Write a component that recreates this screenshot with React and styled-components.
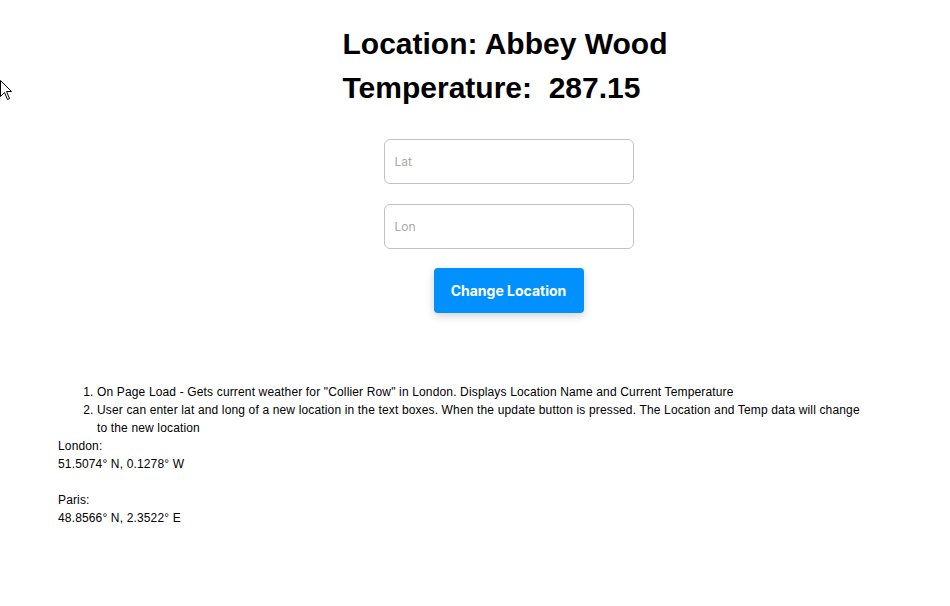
import { createGlobalStyle, styled } from "styled-components";

const GlobalStyle = createGlobalStyle`
  html, body {
    margin: 0;
    padding: 0;
    background: #ffffff;
  }

  body {
    font-family: "Liberation Sans", Arial, sans-serif;
    color: #000;
  }
`;

export default function App() {
  return (
    <>
      <GlobalStyle />
      <Page>
        <Cursor width="13" height="21" viewBox="0 0 13 21">
          <path
            d="M0.5 0.5 L0.5 16.5 L4.5 12.5 L7.5 19.5 L9.5 18.5 L6.5 11.5 L11.5 11.5 Z"
            fill="#fff"
            stroke="#000"
            strokeWidth="1"
          />
        </Cursor>

        <Weather>
          <Heading>
            <Title>Location: Abbey Wood</Title>
            <Title>Temperature:&nbsp; 287.15</Title>
          </Heading>

          <Form>
            <Field placeholder="Lat" />
            <Field placeholder="Lon" />
            <Button type="button">Change Location</Button>
          </Form>
        </Weather>

        <Notes>
          <Steps>
            <li>
              On Page Load - Gets current weather for "Collier Row" in London.
              Displays Location Name and Current Temperature
            </li>
            <li>
              User can enter lat and long of a new location in the text boxes.
              When the update button is pressed. The Location and Temp data will
              change to the new location
            </li>
          </Steps>
          <p>
            London:
            <br />
            51.5074° N, 0.1278° W
            <br />
            <br />
            Paris:
            <br />
            48.8566° N, 2.3522° E
          </p>
        </Notes>
      </Page>
    </>
  );
}

const Page = styled.div`
  position: relative;
  width: 950px;
  min-height: 606px;
`;

const Cursor = styled.svg`
  position: absolute;
  left: 0;
  top: 80px;
`;

const Weather = styled.section`
  display: flex;
  flex-direction: column;
  align-items: center;
  padding: 22px 0 0 67px;
`;

const Heading = styled.div`
  display: flex;
  flex-direction: column;
  align-items: flex-start;
  margin-left: -7px;
`;

const Title = styled.h1`
  margin: 0;
  font-size: 30px;
  line-height: 44px;
  font-weight: 700;
  white-space: nowrap;
`;

const Form = styled.div`
  display: flex;
  flex-direction: column;
  align-items: center;
  gap: 20px;
  margin-top: 29px;
`;

const Field = styled.input`
  box-sizing: border-box;
  width: 250px;
  height: 45px;
  padding: 0 10px;
  border: 1px solid #c2c2c2;
  border-radius: 6px;
  font-family: Inter, "Noto Sans", sans-serif;
  font-size: 12px;
  outline: none;

  &::placeholder {
    color: #a9a9a9;
  }
`;

const Button = styled.button`
  width: 150px;
  height: 45px;
  margin-top: -1px;
  border: none;
  border-radius: 4px;
  background: #0091ff;
  color: #fff;
  font-family: Inter, "Noto Sans", sans-serif;
  font-size: 14px;
  font-weight: 700;
  box-shadow: 0 3px 8px rgba(0, 0, 0, 0.18);
  cursor: pointer;
`;

const Notes = styled.div`
  width: 805px;
  margin: 70px 0 0 58px;
  font-size: 12px;
  line-height: 18px;
  letter-spacing: 0.15px;

  p {
    margin: 0;
  }
`;

const Steps = styled.ol`
  margin: 0;
  padding-left: 39px;
`;
